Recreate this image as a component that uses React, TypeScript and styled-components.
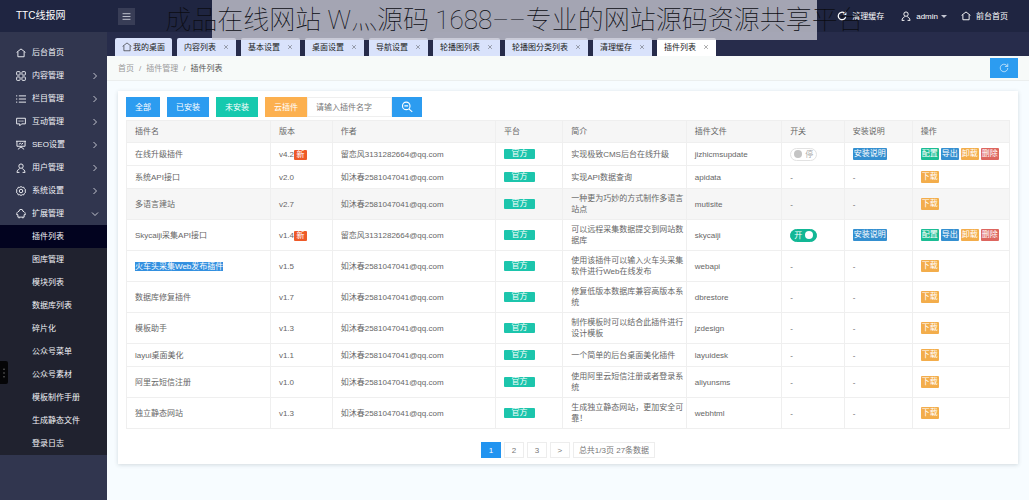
import React, { useState } from "react";
import styled, { createGlobalStyle, css } from "styled-components";

const Global = createGlobalStyle`
  * { box-sizing: border-box; }
  html, body, #root { height: 100%; }
  body {
    margin: 0;
    background: #f7fcff;
    color: #666;
    font: 8px/11px "Liberation Sans", "Noto Sans CJK SC", sans-serif;
  }
  button, input { font: inherit; margin: 0; }
  a { color: inherit; text-decoration: none; }
  ul { list-style: none; margin: 0; padding: 0; }
`;

const Page = styled.div`
  min-height: 100%;
  display: flex;
  flex-direction: column;
`;

const Header = styled.header`
  display: flex;
  align-items: center;
  height: 32px;
  padding: 0 21px 0 16px;
  background: #1f2541;
  color: #fff;
`;

const Brand = styled.a`
  width: 102px;
  font-size: 10px;
  line-height: 14px;
`;

const MenuToggle = styled.button`
  display: flex;
  align-items: center;
  justify-content: center;
  width: 17px;
  height: 17px;
  padding: 0;
  border: 0;
  background: #383d56;
  color: #d4d7e0;
`;

const TopNav = styled.nav`
  display: flex;
  gap: 14px;
  margin-left: auto;
`;

const TopLink = styled.a`
  display: flex;
  align-items: center;
  gap: 5px;
`;

const UserLink = styled(TopLink)`
  padding-left: 3px;
`;

const Caret = styled.span`
  border: 3px solid transparent;
  border-top-color: #c3c6d2;
  border-bottom: 0;
  margin-left: -2px;
`;

const Banner = styled.div`
  position: absolute;
  top: 0;
  left: 0;
  right: 0;
  display: flex;
  justify-content: center;
  pointer-events: none;
`;

const BannerPlate = styled.div`
  display: flex;
  justify-content: center;
  width: 605px;
  height: 40px;
  background: rgba(197, 197, 207, 0.8);
`;

const BannerTitle = styled.h1`
  margin: 0;
  font: 100 26px/40px Roboto, "Noto Sans CJK SC", sans-serif;
  color: #0b0c12;
  white-space: nowrap;
`;

const Body = styled.div`
  display: flex;
  flex: 1;
`;

const Sidebar = styled.aside`
  flex: none;
  width: 107px;
  padding-top: 9px;
  background: #31364f;
  color: #f2f3f7;
`;

const MenuLink = styled.a`
  display: grid;
  grid-template-columns: 10px 1fr 8px;
  align-items: center;
  gap: 6px;
  height: 23px;
  padding: 0 8px 0 16px;
`;

const SubMenu = styled.ul`
  background: #20222f;
`;

const SubLink = styled.a<{ $active?: boolean }>`
  display: flex;
  align-items: center;
  height: 23px;
  padding-left: 32px;
  background: ${(p) => (p.$active ? "#02031f" : "transparent")};
`;

const EdgeHandle = styled.button`
  position: fixed;
  left: 0;
  top: 361px;
  display: flex;
  align-items: center;
  justify-content: center;
  width: 8px;
  height: 23px;
  padding: 0;
  border: 0;
  border-radius: 0 2px 2px 0;
  background: #050507;
  color: #999;
`;

const Main = styled.main`
  flex: 1;
  min-width: 0;
`;

const TabBar = styled.nav`
  display: flex;
  align-items: flex-end;
  gap: 5px;
  height: 24px;
  padding-left: 8px;
  background: #272c4b;
`;

const Tab = styled.a<{ $active?: boolean }>`
  display: flex;
  align-items: center;
  gap: 7px;
  height: 18px;
  padding: 0 7px;
  border-radius: 2px 2px 0 0;
  background: ${(p) => (p.$active ? "#fff" : "#d9e2fb")};
  color: #222;
  white-space: nowrap;
`;

const HomeTab = styled(Tab)`
  gap: 1px;
`;

const CrumbBar = styled.div`
  display: flex;
  align-items: center;
  justify-content: space-between;
  height: 25px;
  padding: 0 11px;
  border-bottom: 1px solid #ebeeee;
  background: #f7faf9;
`;

const Crumbs = styled.nav`
  display: flex;
  gap: 5px;
  color: #999;
`;

const Current = styled.span`
  color: #555;
`;

const buttonTone = {
  blue: "#2c9cf0",
  green: "#16c9ae",
  orange: "#fcb04f",
};

const Button = styled.button<{ $tone: keyof typeof buttonTone }>`
  display: flex;
  align-items: center;
  justify-content: center;
  height: 20px;
  padding: 0 9px;
  border: 0;
  background: ${(p) => buttonTone[p.$tone]};
  color: #fff;
  white-space: nowrap;
`;

const Refresh = styled(Button)`
  width: 28px;
`;

const Card = styled.section`
  margin: 10px 11px 36px;
  padding: 6px 8px;
  background: #fff;
  box-shadow: 0 1px 4px rgba(60, 80, 90, 0.2);
`;

const Toolbar = styled.form`
  display: flex;
  gap: 7px;
  margin-bottom: 3px;
`;

const SearchGroup = styled.div`
  display: flex;
  margin-left: -7px;
`;

const SearchInput = styled.input`
  width: 85px;
  height: 20px;
  padding: 0 8px;
  border: 1px solid #efefef;
  background: #fff;
  color: #555;
  &::placeholder { color: #777; opacity: 1; }
`;

const Table = styled.table`
  width: 100%;
  border-collapse: collapse;
  table-layout: fixed;
`;

const cell = css`
  padding: 0 2px 0 8px;
  border: 1px solid #efefef;
  text-align: left;
  font-weight: 400;
`;

const Th = styled.th`
  ${cell}
  height: 22px;
  background: #f6f6f6;
`;

const Row = styled.tr<{ $tall?: boolean; $hover?: boolean }>`
  height: ${(p) => (p.$tall ? 31 : 23)}px;
  background: ${(p) => (p.$hover ? "#f6f6f6" : "#fff")};
`;

const Td = styled.td`
  ${cell}
`;

const Marked = styled.mark`
  background: #3390e0;
  color: #fff;
`;

const NewBadge = styled.span`
  display: inline-block;
  width: 13px;
  height: 10px;
  line-height: 10px;
  text-align: center;
  border-radius: 1px;
  background: #ee5a28;
  color: #fff;
`;

const Official = styled.span`
  display: block;
  width: 31px;
  height: 10px;
  line-height: 10px;
  text-align: center;
  border-radius: 1px;
  background: #1cc5ac;
  color: #fff;
`;

const actionTone = {
  green: "#1bbd94",
  blue: "#348fd0",
  orange: "#f3ad4b",
  red: "#dd665f",
};

const Action = styled.button<{ $tone: keyof typeof actionTone }>`
  height: 12px;
  padding: 0 1px;
  line-height: 12px;
  border: 0;
  border-radius: 1px;
  background: ${(p) => actionTone[p.$tone]};
  color: #fff;
  white-space: nowrap;
`;

const Actions = styled.div`
  display: flex;
  gap: 2px;
`;

const Switch = styled.label<{ $on: boolean }>`
  display: flex;
  flex-direction: ${(p) => (p.$on ? "row" : "row-reverse")};
  align-items: center;
  justify-content: space-between;
  width: 27px;
  height: 13px;
  padding: 0 3px;
  border: 1px solid ${(p) => (p.$on ? "#12b795" : "#e2e2e2")};
  border-radius: 7px;
  background: ${(p) => (p.$on ? "#12b795" : "#fff")};
  color: ${(p) => (p.$on ? "#fff" : "#aaa")};
  input {
    appearance: none;
    width: 8px;
    height: 8px;
    margin: 0;
    border-radius: 50%;
    background: ${(p) => (p.$on ? "#fff" : "#c4c4c4")};
  }
`;

const Pager = styled.nav`
  display: flex;
  justify-content: center;
  gap: 3px;
  margin-top: 13px;
`;

const PageItem = styled.a<{ $active?: boolean }>`
  display: flex;
  align-items: center;
  justify-content: center;
  min-width: 20px;
  height: 16px;
  padding: 0 5px;
  border: 1px solid ${(p) => (p.$active ? "#2294f0" : "#ededed")};
  background: ${(p) => (p.$active ? "#2294f0" : "#fff")};
  color: ${(p) => (p.$active ? "#fff" : "#777")};
`;

const shapes: Record<string, React.ReactNode> = {
  home: <path d="M1 7 8 1.5 15 7M3 6v8h10V6" />,
  grid: (
    <>
      <rect x="1" y="1" width="5.5" height="5.5" rx="1" />
      <rect x="9.5" y="1" width="5.5" height="5.5" rx="1" />
      <rect x="1" y="9.5" width="5.5" height="5.5" rx="1" />
      <rect x="9.5" y="9.5" width="5.5" height="5.5" rx="1" />
    </>
  ),
  list: <path d="M4.5 3H16M4.5 8H16M4.5 13H16M0 3h2M0 8h2M0 13h2" />,
  chat: <path d="M1 2h14v9H9l-3 3v-3H1zM4 6.5h2M7 6.5h2M10 6.5h2" />,
  seo: <path d="M0 2h16M1.5 2v8h13V2M8 10v2M3 15l5-4 5 4M4.5 7l2.500-2 2 2 2.500-2.500" />,
  user: <path d="M8 1.500a3.500 3.500 0 1 1 0 7a3.500 3.500 0 1 1 0-7M1.500 15c.5-3 2-5 4.500-6M14.500 15c-.5-3-2-5-4.500-6M1.500 15h4M10.500 15h4" />,
  gear: (
    <>
      <path d="m8 .8 2 1.400 2.500-.2.800 2.300 2 1.500L14.600 8l.7 2.300-2 1.500-.8 2.300-2.500-.2L8 15.200l-2-1.300-2.500.2-.8-2.300-2-1.500L1.400 8 .7 5.800l2-1.500L3.500 2l2.500.2z" />
      <circle cx="8" cy="8" r="2.800" />
    </>
  ),
  plug: <path d="M5 3.500a3 3 0 0 1 6 0c3 1 4 3 4 5.500h-2v4H3V9H1c0-2.500 1-4.500 4-5.500M5 13v2M11 13v2" />,
  right: <path d="m5 2 6 6-6 6" />,
  down: <path d="m2 5 6 6 6-6" />,
  close: <path d="m3 3 10 10M13 3 3 13" />,
  bars: <path d="M1 3h14M1 8h14M1 13h14" />,
  refresh: <path d="M14 8a6 6 0 1 1-2-4.500L14 5.500M14 1v4.500H9.500" />,
  search: <path d="M7 1.500a5 5 0 1 1 0 10a5 5 0 1 1 0-10M10.500 10.500l4.500 4M4.500 6.500h5" />,
  dots: <path d="M8 1v2M8 7v2M8 13v2" />,
};

const Svg = styled.svg`
  flex: none;
  fill: none;
  stroke: currentColor;
`;

const Icon = ({ name, size = 10, weight = 1.5 }: { name: string; size?: number; weight?: number }) => (
  <Svg width={size} height={size} viewBox="0 0 16 16" strokeWidth={weight} aria-hidden="true">
    {shapes[name]}
  </Svg>
);

const menu = [
  ["home", "后台首页"],
  ["grid", "内容管理"],
  ["list", "栏目管理"],
  ["chat", "互动管理"],
  ["seo", "SEO设置"],
  ["user", "用户管理"],
  ["gear", "系统设置"],
  ["plug", "扩展管理"],
];

const subMenu = [
  "插件列表", "图库管理", "模块列表", "数据库列表", "碎片化",
  "公众号菜单", "公众号素材", "模板制作手册", "生成静态文件", "登录日志",
];

const tabs = [
  "内容列表", "基本设置", "桌面设置", "导航设置",
  "轮播图列表", "轮播图分类列表", "清理缓存", "插件列表",
];

const widths = ["16.3%", "7%", "18.5%", "7.6%", "14%", "10.8%", "7.1%", "7.7%", "11%"];
const heads = ["插件名", "版本", "作者", "平台", "简介", "插件文件", "开关", "安装说明", "操作"];

type Plugin = {
  name: string;
  version: string;
  author?: string;
  intro: string;
  file: string;
  installed?: "on" | "off";
  tall?: boolean;
  hover?: boolean;
  marked?: boolean;
};

const plugins: Plugin[] = [
  { name: "在线升级插件", version: "v4.2", author: "留恋风3131282664@qq.com", intro: "实现极致CMS后台在线升级", file: "jizhicmsupdate", installed: "off" },
  { name: "系统API接口", version: "v2.0", intro: "实现API数据查询", file: "apidata" },
  { name: "多语言建站", version: "v2.7", intro: "一种更为巧妙的方式制作多语言站点", file: "mutisite", tall: true, hover: true },
  { name: "Skycaiji采集API接口", version: "v1.4", author: "留恋风3131282664@qq.com", intro: "可以远程采集数据提交到网站数据库", file: "skycaiji", installed: "on", tall: true },
  { name: "火车头采集Web发布插件", version: "v1.5", intro: "使用该插件可以输入火车头采集软件进行Web在线发布", file: "webapi", tall: true, marked: true },
  { name: "数据库修复插件", version: "v1.7", intro: "修复低版本数据库兼容高版本系统", file: "dbrestore", tall: true },
  { name: "模板助手", version: "v1.3", intro: "制作模板时可以结合此插件进行设计模板", file: "jzdesign", tall: true },
  { name: "layui桌面美化", version: "v1.1", intro: "一个简单的后台桌面美化插件", file: "layuidesk" },
  { name: "阿里云短信注册", version: "v1.0", intro: "使用阿里云短信注册或者登录系统", file: "aliyunsms", tall: true },
  { name: "独立静态网站", version: "v1.3", intro: "生成独立静态网站，更加安全可靠！", file: "webhtml", tall: true },
];

const PluginSwitch = ({ initial, name }: { initial: boolean; name: string }) => {
  const [on, setOn] = useState(initial);
  return (
    <Switch $on={on}>
      {on ? "开" : "停"}
      <input type="checkbox" aria-label={name} checked={on} onChange={() => setOn(!on)} />
    </Switch>
  );
};

const PluginRow = ({ item }: { item: Plugin }) => (
  <Row $tall={item.tall} $hover={item.hover}>
    <Td>{item.marked ? <Marked>{item.name}</Marked> : item.name}</Td>
    <Td>
      {item.version}
      {item.installed && <NewBadge>新</NewBadge>}
    </Td>
    <Td>{item.author ?? "如沐春2581047041@qq.com"}</Td>
    <Td><Official>官方</Official></Td>
    <Td>{item.intro}</Td>
    <Td>{item.file}</Td>
    <Td>{item.installed ? <PluginSwitch initial={item.installed === "on"} name={item.name} /> : "-"}</Td>
    <Td>{item.installed ? <Actions><Action $tone="blue">安装说明</Action></Actions> : "-"}</Td>
    <Td>
      <Actions>
        {item.installed ? (
          <>
            <Action $tone="green">配置</Action>
            <Action $tone="blue">导出</Action>
            <Action $tone="orange">卸载</Action>
            <Action $tone="red">删除</Action>
          </>
        ) : (
          <Action $tone="orange">下载</Action>
        )}
      </Actions>
    </Td>
  </Row>
);

export default function App() {
  return (
    <Page>
      <Global />
      <Header>
        <Brand href="#">TTC线报网</Brand>
        <MenuToggle aria-label="菜单"><Icon name="bars" size={9} /></MenuToggle>
        <TopNav>
          <TopLink href="#"><Icon name="refresh" weight={2} />清理缓存</TopLink>
          <UserLink href="#"><Icon name="user" />admin<Caret /></UserLink>
          <TopLink href="#"><Icon name="home" />前台首页</TopLink>
        </TopNav>
      </Header>
      <Body>
        <Sidebar>
          <ul>
            {menu.map(([icon, label], i) => (
              <li key={label}>
                <MenuLink href="#">
                  <Icon name={icon} />
                  {label}
                  {i > 0 && <Icon name={i === menu.length - 1 ? "down" : "right"} size={8} />}
                </MenuLink>
              </li>
            ))}
          </ul>
          <SubMenu>
            {subMenu.map((label, i) => (
              <li key={label}><SubLink href="#" $active={i === 0}>{label}</SubLink></li>
            ))}
          </SubMenu>
        </Sidebar>
        <Main>
          <TabBar>
            <HomeTab href="#"><Icon name="home" weight={1} />我的桌面</HomeTab>
            {tabs.map((label, i) => (
              <Tab key={label} href="#" $active={i === tabs.length - 1}>
                {label}
                <Icon name="close" size={6} weight={1} />
              </Tab>
            ))}
          </TabBar>
          <CrumbBar>
            <Crumbs>
              <a href="#">首页</a>/<a href="#">插件管理</a>/<Current>插件列表</Current>
            </Crumbs>
            <Refresh $tone="blue" aria-label="刷新"><Icon name="refresh" weight={1} /></Refresh>
          </CrumbBar>
          <Card>
            <Toolbar onSubmit={(e) => e.preventDefault()}>
              <Button type="button" $tone="blue">全部</Button>
              <Button type="button" $tone="blue">已安装</Button>
              <Button type="button" $tone="green">未安装</Button>
              <Button type="button" $tone="orange">云插件</Button>
              <SearchGroup>
                <SearchInput aria-label="插件名字" placeholder="请输入插件名字" />
                <Button $tone="blue" aria-label="搜索"><Icon name="search" size={12} /></Button>
              </SearchGroup>
            </Toolbar>
            <Table>
              <colgroup>{widths.map((width, i) => <col key={i} style={{ width }} />)}</colgroup>
              <thead><tr>{heads.map((h) => <Th key={h} scope="col">{h}</Th>)}</tr></thead>
              <tbody>{plugins.map((p) => <PluginRow key={p.name} item={p} />)}</tbody>
            </Table>
            <Pager aria-label="分页">
              <PageItem href="#" $active>1</PageItem>
              <PageItem href="#">2</PageItem>
              <PageItem href="#">3</PageItem>
              <PageItem href="#">&gt;</PageItem>
              <PageItem as="span">总共1/3页 27条数据</PageItem>
            </Pager>
          </Card>
        </Main>
      </Body>
      <Banner>
        <BannerPlate><BannerTitle>成品在线网站 W灬源码 1688––专业的网站源码资源共享平台</BannerTitle></BannerPlate>
      </Banner>
      <EdgeHandle aria-label="展开"><Icon name="dots" /></EdgeHandle>
    </Page>
  );
}
